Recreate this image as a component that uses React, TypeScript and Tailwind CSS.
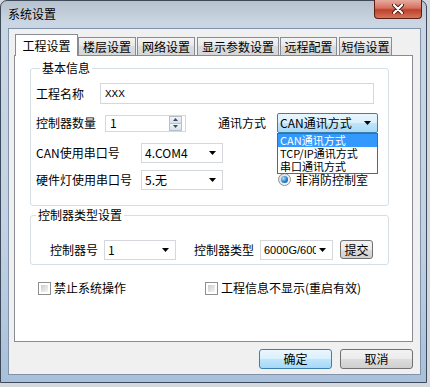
import React from 'react';

const Arrow = () => (
  <svg width="7" height="4" viewBox="0 0 7 4" className="shrink-0">
    <path d="M0 0h7L3.5 4z" fill="#000" />
  </svg>
);

const Select = ({ value, className }: { value: string; className: string }) => (
  <div
    className={`flex items-center justify-between h-[20px] border border-[#d4d7db] bg-white pl-[3px] pr-[6px] ${className}`}
  >
    <span className="whitespace-nowrap">{value}</span>
    <Arrow />
  </div>
);

const Checkbox = ({ label }: { label: string }) => (
  <label className="flex items-center gap-[3px]">
    <span className="w-[13px] h-[13px] border border-[#8f8f8f] bg-white p-[2px]">
      <span className="block w-full h-full bg-[linear-gradient(135deg,#cbcbcb,#f6f6f6)]" />
    </span>
    <span>{label}</span>
  </label>
);

const tabs = ['楼层设置', '网络设置', '显示参数设置', '远程配置', '短信设置'];
const tabWidths = ['w-[58px]', 'w-[58px]', 'w-[82px]', 'w-[57px]', 'w-[53px]'];

export default function App() {
  return (
    <div className="w-[430px] h-[387px] bg-[#d5d8dc] text-[12px] leading-[14px] text-black font-['Noto_Sans_CJK_SC','Noto_Sans',sans-serif] overflow-hidden">
      <div className="w-[427px] h-[383px] flex flex-col pl-[7px] pr-[5px] pb-[7px] rounded-t-[7px] border border-[#3c4a5c] bg-[linear-gradient(to_bottom,#b7c2cd_0px,#cad6e3_22px,#c3d2e2_60%,#a9c0da_100%)]">
        {/* title bar */}
        <div className="h-[27px] flex justify-between items-start">
          <span className="pt-[6px]">系统设置</span>
          <div className="-mt-px -mr-px w-[48px] h-[19px] flex items-center justify-center rounded-b-[4px] border border-t-0 border-[#5e1d12] bg-[linear-gradient(to_bottom,#e8ab9f,#d3705f_45%,#bf3f2a_55%,#d2765e)]">
            <svg width="12" height="10" viewBox="0 0 12 10">
              <path d="M2 1l8 8M10 1l-8 8" stroke="#4a1a12" strokeWidth="4" strokeLinecap="round" />
              <path d="M2 1l8 8M10 1l-8 8" stroke="#ffffff" strokeWidth="2.2" strokeLinecap="round" />
            </svg>
          </div>
        </div>

        {/* client area */}
        <div className="flex-1 flex flex-col bg-[#f0f0f0] border border-[#8193aa] pl-[5px] pr-[7px] pt-[5px]">
          {/* tabs */}
          <div className="h-[21px] flex items-end pl-px">
            <div className="relative z-10 w-[63px] h-[22px] -mb-px flex items-center justify-center bg-white border border-b-0 border-[#898c95]">
              工程设置
            </div>
            {tabs.map((t, i) => (
              <div
                key={t}
                className={`${tabWidths[i]} ${i === 0 ? 'ml-0' : i === 2 || i === 4 ? 'ml-[2px]' : 'ml-px'} h-[18px] flex items-center justify-center whitespace-nowrap border border-b-0 border-[#898c95] bg-[linear-gradient(to_bottom,#f4f4f4,#e6e6e6_50%,#dcdcdc_50%,#d6d6d6)]`}
              >
                {t}
              </div>
            ))}
          </div>

          {/* panel */}
          <div className="h-[287px] bg-white border border-[#898c95] pl-[15px] pt-[5px]">
            <fieldset className="w-[359px] border border-[#d5dfe5] rounded-[3px] pl-[5px] pb-[16px]">
              <legend className="ml-[4px] px-[2px]">基本信息</legend>
              <div className="mt-[8px] h-[21px] flex items-center">
                <span className="w-[64px]">工程名称</span>
                <div className="w-[274px] h-[21px] flex items-center border border-[#d4d7db] pl-[4px] font-['Liberation_Mono',monospace] text-[11px]">
                  XXX
                </div>
              </div>
              <div className="mt-[9px] h-[20px] flex items-center">
                <span className="w-[69px]">控制器数量</span>
                <div className="w-[81px] h-[17px] flex items-center justify-between border border-[#d4d7db] pl-[4px] pr-[3px]">
                  <span>1</span>
                  <div className="flex flex-col w-[13px] h-[15px]">
                    <div className="flex-1 flex items-center justify-center border border-[#b5c0cc] bg-[linear-gradient(to_bottom,#f1f5f9,#d6dfe8)]">
                      <svg width="5" height="3" viewBox="0 0 5 3"><path d="M0 3h5L2.5 0z" fill="#3c4a5a" /></svg>
                    </div>
                    <div className="flex-1 flex items-center justify-center border border-t-0 border-[#b5c0cc] bg-[linear-gradient(to_bottom,#f1f5f9,#d6dfe8)]">
                      <svg width="5" height="3" viewBox="0 0 5 3"><path d="M0 0h5L2.5 3z" fill="#3c4a5a" /></svg>
                    </div>
                  </div>
                </div>
                <span className="ml-[32px] w-[48px]">通讯方式</span>
                <div className="relative ml-[11px] w-[101px]">
                  <div className="h-[20px] flex items-center justify-between pl-[2px] pr-[6px] border border-[#3c7fb1] rounded-[2px] bg-[linear-gradient(to_bottom,#eaf6fd,#d9f0fc_50%,#bee6fd_50%,#a7d9f5)]">
                    <span>CAN通讯方式</span>
                    <Arrow />
                  </div>
                  <div className="absolute left-0 top-full z-20 w-[101px] border border-[#646464] bg-white text-[11px] leading-[13px]">
                    <div className="h-[13px] pl-[2px] bg-[#3399ff] text-white">CAN通讯方式</div>
                    <div className="h-[13px] pl-[2px]">TCP/IP通讯方式</div>
                    <div className="h-[13px] pl-[2px]">串口通讯方式</div>
                  </div>
                </div>
              </div>
              <div className="mt-[10px] h-[20px] flex items-center">
                <span className="w-[105px]">CAN使用串口号</span>
                <Select value="4.COM4" className="w-[82px]" />
              </div>
              <div className="mt-[7px] h-[19px] flex items-center">
                <span className="w-[105px]">硬件灯使用串口号</span>
                <Select value="5.无" className="w-[82px]" />
                <span className="ml-[55px] w-[13px] h-[13px] rounded-full border border-[#8e8f8f] bg-[linear-gradient(135deg,#d8d8d8,#fafafa)] flex items-center justify-center">
                  <span className="w-[7px] h-[7px] rounded-full bg-[radial-gradient(circle_at_35%_35%,#aee0ff,#1a78c8_60%,#0b4f8f)]" />
                </span>
                <span className="ml-[5px]">非消防控制室</span>
              </div>
            </fieldset>

            <fieldset className="mt-[2px] w-[359px] border border-[#d5dfe5] rounded-[3px] pl-[19px] pb-[4px]">
              <legend className="-ml-[14px] px-[2px]">控制器类型设置</legend>
              <div className="mt-[17px] h-[21px] flex items-center">
                <span className="w-[48px]">控制器号</span>
                <Select value="1" className="ml-[6px] w-[72px]" />
                <span className="ml-[18px] w-[60px]">控制器类型</span>
                <div className="ml-[6px] w-[73px] h-[20px] flex items-center justify-between border border-[#d4d7db] pl-[3px] pr-[6px]">
                  <span className="w-[52px] whitespace-nowrap overflow-x-hidden font-['Liberation_Sans',sans-serif] text-[11px] leading-[16px]">6000G/6000</span>
                  <Arrow />
                </div>
                <button className="ml-[7px] w-[33px] h-[19px] flex items-center justify-center border border-[#707070] rounded-[3px] bg-[linear-gradient(to_bottom,#f2f2f2,#ebebeb_50%,#dddddd_50%,#cfcfcf)]">
                  提交
                </button>
              </div>
            </fieldset>

            <div className="mt-[16px] flex items-center pl-[8px]">
              <div className="w-[167px]">
                <Checkbox label="禁止系统操作" />
              </div>
              <Checkbox label="工程信息不显示(重启有效)" />
            </div>
          </div>

          {/* bottom buttons */}
          <div className="mt-[7px] flex justify-end gap-[8px]">
            <button className="w-[73px] h-[20px] flex items-center justify-center border border-[#3c7fb1] rounded-[3px] bg-[linear-gradient(to_bottom,#eaf6fd,#d9f0fc_50%,#bee6fd_50%,#a7d9f5)]">
              确定
            </button>
            <button className="w-[73px] h-[20px] flex items-center justify-center border border-[#707070] rounded-[3px] bg-[linear-gradient(to_bottom,#f2f2f2,#ebebeb_50%,#dddddd_50%,#cfcfcf)]">
              取消
            </button>
          </div>
        </div>
      </div>
    </div>
  );
}
